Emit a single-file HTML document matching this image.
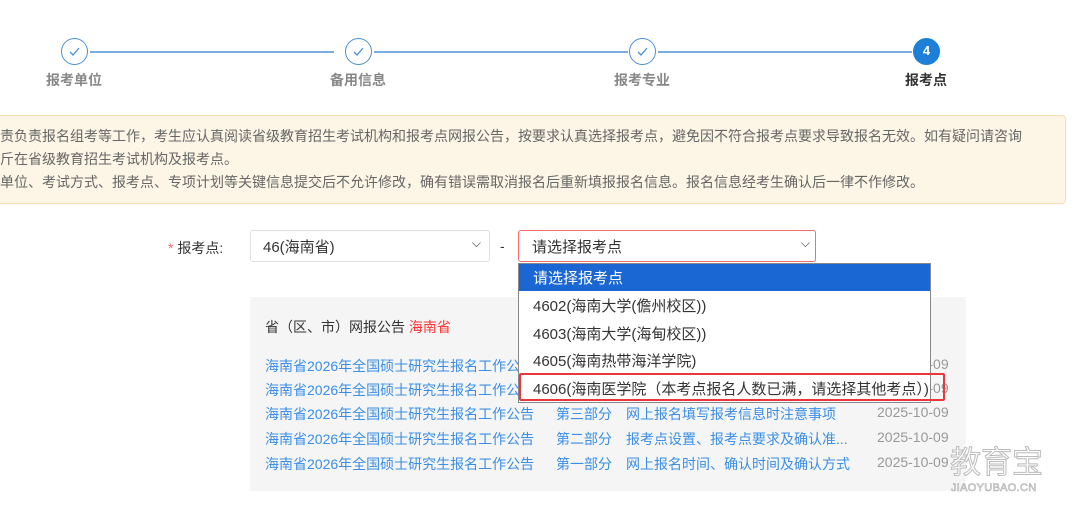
<!DOCTYPE html>
<html><head><meta charset="utf-8"><style>
*{margin:0;padding:0;box-sizing:border-box}
body{width:1080px;height:514px;overflow:hidden;background:#fff;font-family:"Liberation Sans","Noto Sans CJK SC",sans-serif;position:relative;color:#606266}
.a{position:absolute;white-space:nowrap}
.c{position:absolute;width:27px;height:27px;border-radius:50%;border:1.5px solid #4a90d9;background:#fff;color:#4a90d9;font-size:13px;text-align:center;line-height:24px}
.c svg{position:absolute;left:7px;top:8px}
.ln{position:absolute;height:1.5px;background:#7aaee0;top:51px}
.st{position:absolute;top:70px;font-size:14px;font-weight:bold;color:#888;width:100px;text-align:center}
.lk{color:#3a8ee6;font-size:14px}
.dt{color:#999;font-size:14px}
.op{position:absolute;left:533px;font-size:15px;color:#333}
</style></head><body>
<div class="ln" style="left:90px;width:244px"></div>
<div class="ln" style="left:374px;width:254px"></div>
<div class="ln" style="left:658px;width:254px"></div>
<div class="c" style="left:61px;top:38px"><svg width="11" height="9" viewBox="0 0 11 9"><path d="M1 5 L4 8 L10 1" fill="none" stroke="#4a90d9" stroke-width="1.3"/></svg></div>
<div class="c" style="left:345px;top:38px"><svg width="11" height="9" viewBox="0 0 11 9"><path d="M1 5 L4 8 L10 1" fill="none" stroke="#4a90d9" stroke-width="1.3"/></svg></div>
<div class="c" style="left:629px;top:38px"><svg width="11" height="9" viewBox="0 0 11 9"><path d="M1 5 L4 8 L10 1" fill="none" stroke="#4a90d9" stroke-width="1.3"/></svg></div>
<div class="c" style="left:913px;top:38px;background:#1e7fd8;border-color:#1e7fd8;color:#fff;font-weight:bold">4</div>
<div class="st" style="left:24px">报考单位</div>
<div class="st" style="left:308px">备用信息</div>
<div class="st" style="left:592px">报考专业</div>
<div class="st" style="left:876px;color:#333">报考点</div>

<div class="a" style="left:-4px;top:115px;width:1070px;height:89px;background:#fdf5e6;border:1px solid #f8dfae;border-radius:4px"></div>
<div class="a" style="left:0;top:126px;font-size:14px;color:#666">责负责报名组考等工作，考生应认真阅读省级教育招生考试机构和报考点网报公告，按要求认真选择报考点，避免因不符合报考点要求导致报名无效。如有疑问请咨询</div>
<div class="a" style="left:0;top:149px;font-size:14px;color:#666">斤在省级教育招生考试机构及报考点。</div>
<div class="a" style="left:0;top:172px;font-size:14px;color:#666">单位、考试方式、报考点、专项计划等关键信息提交后不允许修改，确有错误需取消报名后重新填报报名信息。报名信息经考生确认后一律不作修改。</div>

<div class="a" style="left:168px;top:238px;font-size:14px;color:#333"><span style="color:#f56c6c">*</span> 报考点:</div>
<div class="a" style="left:250px;top:230px;width:240px;height:32px;border:1px solid #dcdfe6;border-radius:3px;font-size:15px;color:#333;padding:5px 0 0 12px">46(海南省)<span style="position:absolute;right:8px;top:5px;font-size:12px">⌵</span></div>
<div class="a" style="left:500px;top:238px;font-size:14px;color:#333">-</div>
<div class="a" style="left:518px;top:230px;width:298px;height:32px;border:1px solid #f56c6c;border-radius:3px;font-size:15px;color:#333;padding:5px 0 0 13px">请选择报考点<span style="position:absolute;right:5px;top:5px;font-size:12px">⌵</span></div>

<div class="a" style="left:250px;top:297px;width:716px;height:194px;background:#f5f5f5"></div>
<div class="a" style="left:265px;top:317px;font-size:14px;color:#333">省（区、市）网报公告 <span style="color:#f33">海南省</span></div>
<div class="a lk" style="left:265px;top:356px">海南省2026年全国硕士研究生报名工作公告</div>
<div class="a lk" style="left:265px;top:380px">海南省2026年全国硕士研究生报名工作公告</div>
<div class="a lk" style="left:265px;top:404px">海南省2026年全国硕士研究生报名工作公告</div>
<div class="a lk" style="left:265px;top:429px">海南省2026年全国硕士研究生报名工作公告</div>
<div class="a lk" style="left:265px;top:454px">海南省2026年全国硕士研究生报名工作公告</div>
<div class="a lk" style="left:556px;top:404px">第三部分</div>
<div class="a lk" style="left:556px;top:429px">第二部分</div>
<div class="a lk" style="left:556px;top:454px">第一部分</div>
<div class="a lk" style="left:626px;top:404px">网上报名填写报考信息时注意事项</div>
<div class="a lk" style="left:626px;top:429px">报考点设置、报考点要求及确认准...</div>
<div class="a lk" style="left:626px;top:454px">网上报名时间、确认时间及确认方式</div>
<div class="a dt" style="left:877px;top:356px">2025-10-09</div>
<div class="a dt" style="left:877px;top:380px">2025-10-09</div>
<div class="a dt" style="left:877px;top:404px">2025-10-09</div>
<div class="a dt" style="left:877px;top:429px">2025-10-09</div>
<div class="a dt" style="left:877px;top:454px">2025-10-09</div>

<div class="a" style="left:518px;top:263px;width:413px;height:140px;background:#fff;border:1px solid #888"></div>
<div class="a" style="left:519px;top:264px;width:411px;height:27px;background:#1a66d2"></div>
<div class="op" style="top:267px;color:#fff">请选择报考点</div>
<div class="op" style="top:295px">4602(海南大学(儋州校区))</div>
<div class="op" style="top:323px">4603(海南大学(海甸校区))</div>
<div class="op" style="top:350px">4605(海南热带海洋学院)</div>
<div class="op" style="top:378px">4606(海南医学院（本考点报名人数已满，请选择其他考点）)</div>
<div class="a" style="left:519px;top:373px;width:426px;height:28px;border:2.5px solid #e8383d;border-radius:2px"></div>

<div class="a" style="left:950px;top:437px;font-size:31px;color:#fff;-webkit-text-stroke:1px #bbb;letter-spacing:0px">教育宝</div>
<div class="a" style="left:951px;top:482px;font-size:11px;color:#fff;-webkit-text-stroke:0.6px #aaa;letter-spacing:0.3px">JIAOYUBAO.CN</div>
</body></html>
